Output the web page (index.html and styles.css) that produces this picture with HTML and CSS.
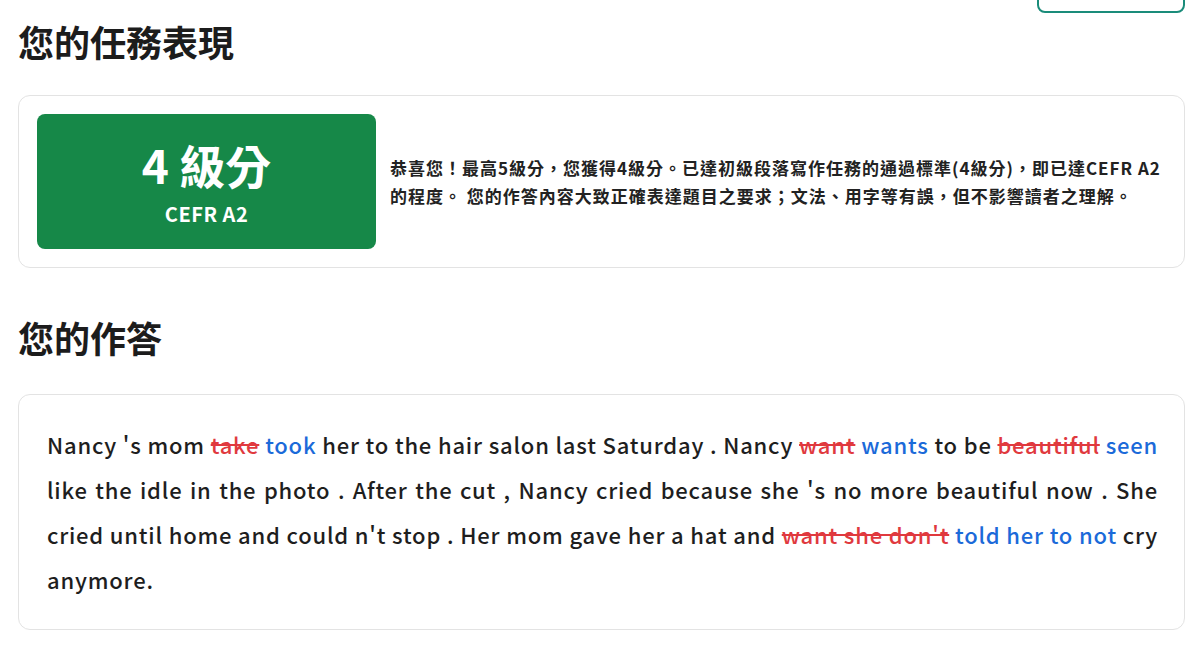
FILE: index.html
```html
<!DOCTYPE html>
<html lang="zh-Hant">
<head>
<meta charset="utf-8">
<title>您的任務表現</title>
<link rel="stylesheet" href="styles.css">
</head>
<body>
<div class="page">
  <div class="topbar">
    <button class="outline-btn" type="button"></button>
  </div>

  <h2 class="section-title">您的任務表現</h2>
  <div class="card result-card">
    <div class="level-box">
      <div class="level-main">4 級分</div>
      <div class="level-sub">CEFR A2</div>
    </div>
    <p class="level-desc">恭喜您！最高5級分，您獲得4級分。已達初級段落寫作任務的通過標準(4級分)，即已達CEFR A2的程度。 您的作答內容大致正確表達題目之要求；文法、用字等有誤，但不影響讀者之理解。</p>
  </div>

  <h2 class="section-title answer-title">您的作答</h2>
  <div class="card essay-card">
    <p class="essay">Nancy 's mom <del class="wrong">take</del> <ins class="fix">took</ins> her to the hair salon last Saturday . Nancy <del class="wrong">want</del> <ins class="fix">wants</ins> to be <del class="wrong">beautiful</del> <ins class="fix">seen</ins> like the idle in the photo . After the cut , Nancy cried because she 's no more beautiful now . She cried until home and could n't stop . Her mom gave her a hat and <del class="wrong">want she don't</del> <ins class="fix">told her to not</ins> cry anymore.</p>
  </div>
</div>
</body>
</html>
```

FILE: styles.css
```css
* { box-sizing: border-box; }

html, body {
  margin: 0;
  padding: 0;
  background: #ffffff;
}

body {
  font-family: "Noto Sans CJK TC", "Noto Sans", sans-serif;
  color: #222222;
}

.page {
  padding: 0 11px 40px 18px;
}

.topbar {
  display: flex;
  justify-content: flex-end;
  margin-top: -27px;
}

.outline-btn {
  width: 148px;
  height: 40px;
  border: 2px solid #1a8c7a;
  border-radius: 8px;
  background: #ffffff;
  padding: 0;
}

.section-title {
  margin: 7px 0 32px;
  font-size: 36px;
  line-height: 43px;
  font-weight: 700;
  color: #1c1c1c;
}

.answer-title {
  margin-top: 48px;
  margin-bottom: 35px;
}

.card {
  border: 1px solid #e3e3e3;
  border-radius: 12px;
  background: #ffffff;
}

.result-card {
  display: flex;
  align-items: center;
  gap: 14px;
  padding: 18px;
}

.level-box {
  flex: 0 0 339px;
  height: 135px;
  background: #168848;
  border-radius: 8px;
  color: #ffffff;
  display: flex;
  flex-direction: column;
  align-items: center;
  justify-content: center;
}

.level-main {
  font-size: 46px;
  line-height: 56px;
  font-weight: 700;
  margin-bottom: 9px;
}

.level-sub {
  font-size: 20px;
  line-height: 26px;
  font-weight: 700;
  letter-spacing: 0.5px;
}

.level-desc {
  margin: 0;
  font-size: 17px;
  line-height: 28px;
  font-weight: 700;
  letter-spacing: 1px;
  color: #222222;
}

.essay-card {
  padding: 27px 26px 27px 28px;
}

.essay {
  margin: 0;
  font-size: 22px;
  line-height: 45px;
  font-weight: 500;
  letter-spacing: 0.8px;
  text-align: justify;
  color: #1e1e1e;
}

.wrong {
  color: #e0393e;
  text-decoration: line-through;
  text-decoration-thickness: 2px;
}

.fix {
  color: #1b6ad9;
  text-decoration: none;
}
```
